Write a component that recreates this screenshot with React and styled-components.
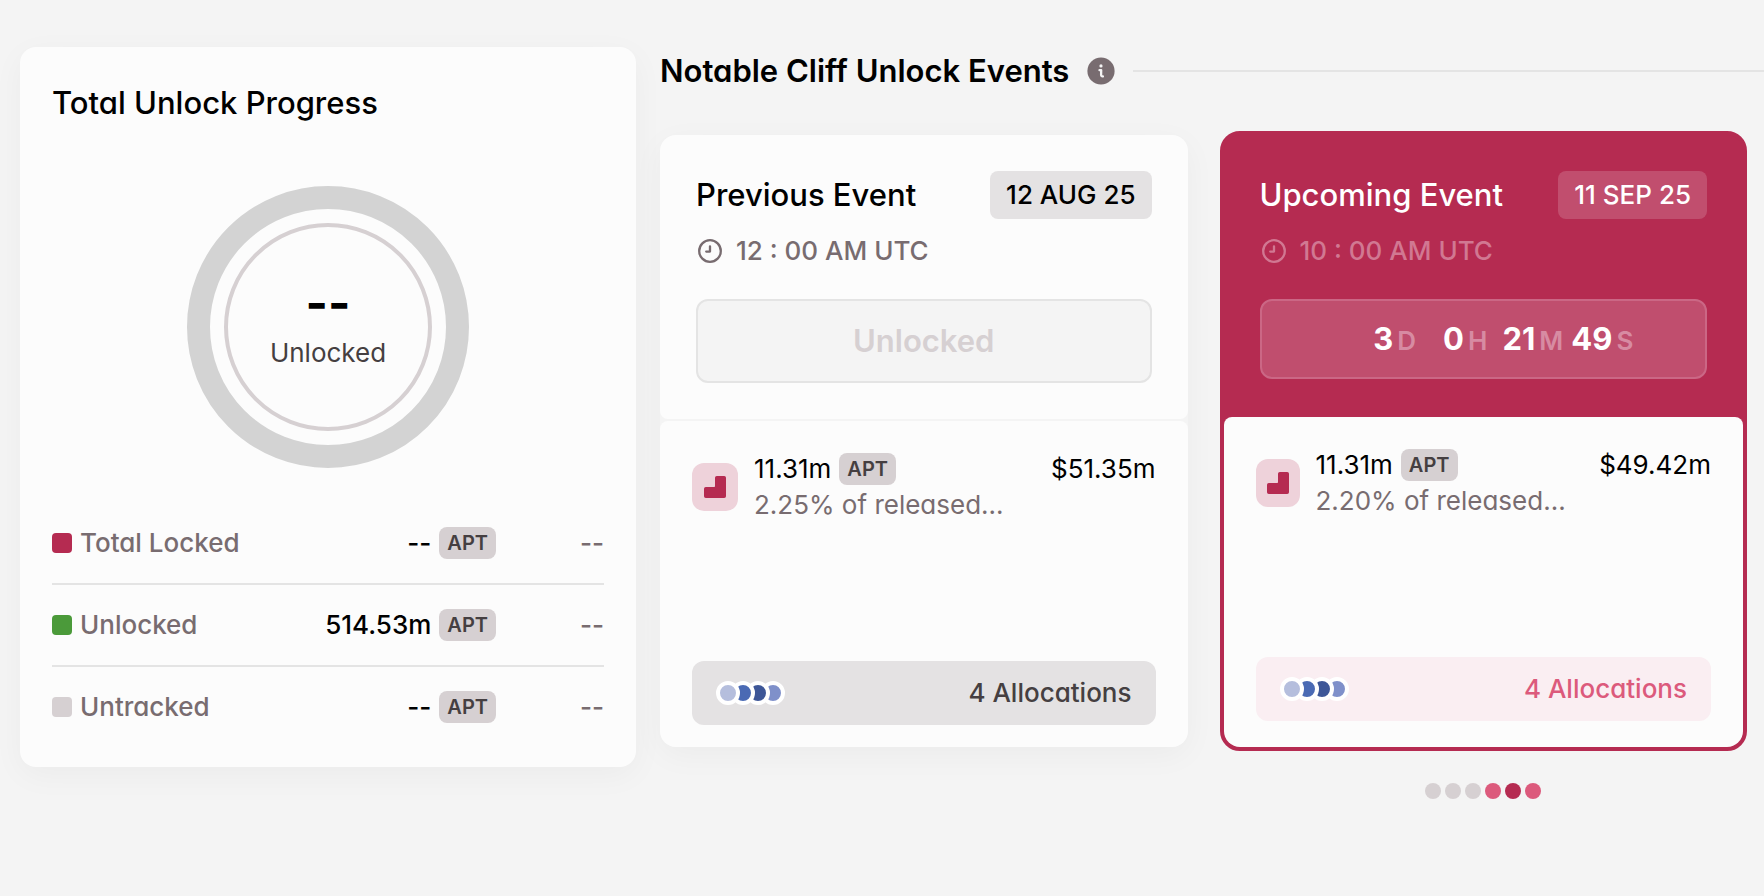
import React from "react";
import styled, { createGlobalStyle, css } from "styled-components";

const GlobalStyle = createGlobalStyle`
  *, *::before, *::after { box-sizing: border-box; }
  body {
    margin: 0;
    background: #f4f4f4;
    color: #000;
    font-family: Inter, "Liberation Sans", sans-serif;
    font-feature-settings: "cv11";
    font-size: 26px;
    line-height: 36px;
  }
  h2, h3, p { margin: 0; }
  button { font: inherit; font-feature-settings: inherit; }
`;

const Page = styled.main`
  display: grid;
  grid-template-columns: 616fr 1104fr;
  align-items: start;
  gap: 24px;
  padding: 47px 0 48px 20px;
`;

const Panel = styled.section`
  min-width: 0;
  padding: 36px 32px 20px;
  background: #fcfcfc;
  border-radius: 16px;
  box-shadow: 0 8px 32px rgba(0, 0, 0, 0.04);
`;

const Title = styled.h2`
  font-size: 31px;
  line-height: 40px;
  font-weight: ${(p) => (p.$strong ? 600 : 500)};
  white-space: nowrap;
`;

const Ring = styled.div`
  display: grid;
  place-items: center;
  padding: 63px 0 35px;
  > * { grid-area: 1 / 1; }
`;

const RingLabel = styled.div`
  display: flex;
  flex-direction: column;
  align-items: center;
  gap: 4px;
  padding-bottom: 8px;
  color: #453f41;
  strong {
    font-size: 48px;
    line-height: 56px;
    font-weight: 700;
    color: #000;
  }
`;

const Breakdown = styled.table`
  width: 100%;
  border-collapse: collapse;
  font-weight: 500;
  line-height: 34px;
  color: #786c70;
  tr + tr { border-top: 2px solid #e4e4e4; }
  th, td { padding: 23px 0; font-weight: 500; }
  th { text-align: left; }
  td { text-align: right; }
  td:last-child { width: 108px; }
`;

const Inline = styled.span`
  display: inline-flex;
  align-items: center;
  gap: 8px;
  vertical-align: top;
  color: ${(p) => p.$color || "inherit"};
`;

const Swatch = styled.span`
  width: 20px;
  height: 20px;
  border-radius: 4px;
  background: ${(p) => p.$color};
`;

const Ticker = styled.span`
  padding: 0 8px;
  border-radius: 8px;
  background: #d6d0d2;
  color: #453f41;
  font-size: 20px;
  line-height: 32px;
  font-weight: 600;
`;

const Events = styled.section`
  min-width: 0;
`;

const EventsHeader = styled.header`
  display: flex;
  align-items: center;
  gap: 18px;
  padding-top: 4px;
  svg { flex: none; }
`;

const Rule = styled.span`
  flex: 1;
  height: 2px;
  background: #e4e4e4;
`;

const EventGrid = styled.div`
  display: grid;
  grid-template-columns: 1fr 1fr;
  align-items: center;
  gap: 32px;
  padding: 40px 17px 0 0;
`;

const EventCard = styled.article`
  min-width: 0;
  display: flex;
  flex-direction: column;
  ${(p) =>
    p.$active
      ? css`
          border: 4px solid #b52b51;
          border-radius: 20px;
          background: #b52b51;
          color: #fff;
        `
      : css`
          gap: 2px;
          border-radius: 16px;
          box-shadow: 0 8px 32px rgba(0, 0, 0, 0.04);
        `}
`;

const EventTop = styled.div`
  padding: ${(p) => (p.$active ? "36px 36px 38px" : "36px")};
  border-radius: 16px 16px 8px 8px;
  background: ${(p) => (p.$active ? "transparent" : "#fcfcfc")};
`;

const Between = styled.div`
  display: flex;
  align-items: center;
  justify-content: space-between;
`;

const DateTag = styled.time`
  padding: 0 16px;
  border-radius: 8px;
  line-height: 48px;
  font-weight: 500;
  white-space: nowrap;
  background: ${(p) => (p.$active ? "rgba(255,255,255,.17)" : "#e4e2e3")};
`;

const Time = styled.p`
  display: flex;
  align-items: center;
  gap: 12px;
  margin: 14px 0 30px;
  font-weight: 500;
  color: ${(p) => (p.$active ? "#d17892" : "#786c70")};
`;

const StatusButton = styled.button`
  display: block;
  width: 100%;
  height: 84px;
  border: 2px solid #e4e4e4;
  border-radius: 12px;
  background: #f4f4f4;
  color: #d6d0d2;
  font-size: 31px;
  font-weight: 600;
`;

const Countdown = styled.div`
  display: flex;
  align-items: center;
  justify-content: center;
  gap: 8px;
  height: 80px;
  border: 2px solid #cb6785;
  border-radius: 12px;
  background: #c04e6e;
`;

const Unit = styled.span`
  display: flex;
  align-items: baseline;
  gap: 4px;
  font-weight: 600;
  color: #d78ba2;
  b {
    min-width: ${(p) => (p.$wide ? 60 : 40)}px;
    text-align: right;
    font-size: 31px;
    line-height: 44px;
    font-weight: 700;
    color: #fff;
  }
`;

const EventBottom = styled.div`
  display: flex;
  flex-direction: column;
  justify-content: space-between;
  min-height: ${(p) => (p.$active ? 330 : 326)}px;
  padding: ${(p) => (p.$active ? "30px 32px 26px" : "30px 32px 22px")};
  border-radius: 8px 8px 16px 16px;
  background: #fcfcfc;
  color: #000;
`;

const Allocation = styled.div`
  display: flex;
  align-items: center;
  gap: 16px;
`;

const TokenIcon = styled.span`
  flex: none;
  display: grid;
  place-items: center;
  width: ${(p) => (p.$active ? 44 : 46)}px;
  height: 48px;
  border-radius: 12px;
  background: #eed2da;
`;

const Amounts = styled.div`
  flex: 1;
  min-width: 0;
`;

const Muted = styled.p`
  color: #786c70;
  white-space: nowrap;
`;

const AllocationsButton = styled.button`
  display: flex;
  align-items: center;
  justify-content: space-between;
  width: 100%;
  height: 64px;
  padding: 0 24px;
  border: 0;
  border-radius: 12px;
  font-weight: 500;
  background: ${(p) => (p.$active ? "#faeef2" : "#e4e2e3")};
  color: ${(p) => (p.$active ? "#dc5a7c" : "#453f41")};
`;

const Pager = styled.nav`
  grid-column: 2;
  justify-self: center;
  display: flex;
  gap: 4px;
`;

const PagerDot = styled.button`
  width: 16px;
  height: 16px;
  padding: 0;
  border: 0;
  border-radius: 50%;
  background: ${(p) => p.$color};
`;

const InfoIcon = () => (
  <svg width="28" height="28" viewBox="0 0 28 28" aria-hidden="true">
    <circle cx="14" cy="14" r="13.6" fill="#786c70" />
    <circle cx="14" cy="8.9" r="1.6" fill="#f4f4f4" />
    <path d="M12.5 13.2H14.2L14.1 17.6Q14 19.6 15.900 19.400" fill="none" stroke="#f4f4f4" strokeWidth="2.3" strokeLinecap="round" strokeLinejoin="round" />
  </svg>
);

const ClockIcon = () => (
  <svg width="28" height="28" viewBox="0 0 28 28" fill="none" stroke="currentColor" strokeWidth="2.3" strokeLinecap="round" strokeLinejoin="round" aria-hidden="true">
    <circle cx="14" cy="14" r="10.8" />
    <path d="M14 9.300V14.600H10.200" />
  </svg>
);

const StepIcon = () => (
  <svg width="22" height="22" viewBox="0 0 22 22" aria-hidden="true">
    <path d="M11 1.8Q11 0 12.8 0H20.200Q22 0 22 1.800V20.200Q22 22 20.200 22H1.800Q0 22 0 20.200V12.800Q0 11 1.800 11H10.200Q11 11 11 10.200Z" fill="#b52b51" />
  </svg>
);

const CategoryDots = () => (
  <svg width="69" height="24" viewBox="0 0 69 24" aria-hidden="true">
    {[
      [57, "#7f90ca"],
      [42, "#3d5697"],
      [27, "#4a6ab4"],
      [12, "#b5bedd"],
    ].map(([cx, color]) => (
      <circle key={cx} cx={cx} cy="12" r="10" fill={color} stroke="#fff" strokeWidth="4" />
    ))}
  </svg>
);

const ROWS = [
  { label: "Total Locked", color: "#b52b51", amount: "--" },
  { label: "Unlocked", color: "#4b9a3a", amount: "514.53m" },
  { label: "Untracked", color: "#d6d0d2", amount: "--" },
];

const UNITS = [["3", "D"], ["0", "H"], ["21", "M"], ["49", "S"]];
const PAGES = ["#d6d0d2", "#d6d0d2", "#d6d0d2", "#dc5a7c", "#b52b51", "#dc5a7c"];

function Event({ title, date, time, share, value, active, children }) {
  return (
    <EventCard $active={active}>
      <EventTop $active={active}>
        <Between>
          <Title as="h3">{title}</Title>
          <DateTag $active={active}>{date}</DateTag>
        </Between>
        <Time $active={active}>
          <ClockIcon />
          {time}
        </Time>
        {children}
      </EventTop>
      <EventBottom $active={active}>
        <Allocation>
          <TokenIcon $active={active}><StepIcon /></TokenIcon>
          <Amounts>
            <Between>
              <Inline>11.31m <Ticker>APT</Ticker></Inline>
              <span>{value}</span>
            </Between>
            <Muted>{share} of released...</Muted>
          </Amounts>
        </Allocation>
        <AllocationsButton type="button" $active={active}>
          <CategoryDots />
          4 Allocations
        </AllocationsButton>
      </EventBottom>
    </EventCard>
  );
}

export default function App() {
  return (
    <>
      <GlobalStyle />
      <Page>
        <Panel>
          <Title>Total Unlock Progress</Title>
          <Ring>
            <svg width="282" height="282" viewBox="0 0 282 282" fill="none" aria-hidden="true">
              <circle cx="141" cy="141" r="129.5" stroke="#d3d3d3" strokeWidth="23" />
              <circle cx="141" cy="141" r="102" stroke="#d6d0d2" strokeWidth="4" />
            </svg>
            <RingLabel>
              <strong>--</strong>
              <span>Unlocked</span>
            </RingLabel>
          </Ring>
          <Breakdown>
            <tbody>
              {ROWS.map((row) => (
                <tr key={row.label}>
                  <th scope="row">
                    <Inline><Swatch $color={row.color} />{row.label}</Inline>
                  </th>
                  <td>
                    <Inline $color="#000">{row.amount}<Ticker>APT</Ticker></Inline>
                  </td>
                  <td>--</td>
                </tr>
              ))}
            </tbody>
          </Breakdown>
        </Panel>
        <Events>
          <EventsHeader>
            <Title $strong>Notable Cliff Unlock Events</Title>
            <InfoIcon />
            <Rule />
          </EventsHeader>
          <EventGrid>
            <Event title="Previous Event" date="12 AUG 25" time="12 : 00 AM UTC" share="2.25%" value="$51.35m">
              <StatusButton type="button">Unlocked</StatusButton>
            </Event>
            <Event active title="Upcoming Event" date="11 SEP 25" time="10 : 00 AM UTC" share="2.20%" value="$49.42m">
              <Countdown>
                {UNITS.map(([n, unit], i) => (
                  <Unit key={unit} $wide={i === 0}><b>{n}</b>{unit}</Unit>
                ))}
              </Countdown>
            </Event>
            <Pager aria-label="Events">
              {PAGES.map((color, i) => (
                <PagerDot key={i} type="button" $color={color} aria-label={`Event ${i + 1}`} />
              ))}
            </Pager>
          </EventGrid>
        </Events>
      </Page>
    </>
  );
}
